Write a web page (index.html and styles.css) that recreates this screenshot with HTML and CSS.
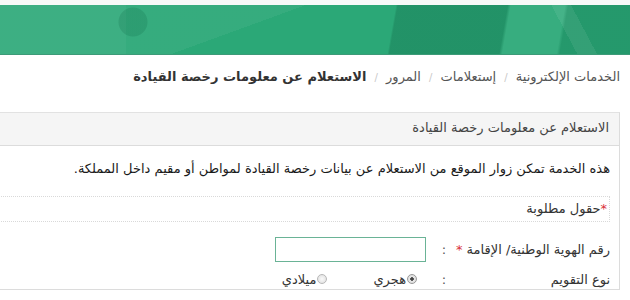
FILE: index.html
```html
<!DOCTYPE html>
<html lang="ar" dir="rtl">
<head>
<meta charset="utf-8">
<title>الاستعلام عن معلومات رخصة القيادة</title>
<link rel="stylesheet" href="styles.css">
</head>
<body>
<div class="top-strip"></div>
<header class="banner"></header>
<main class="page">
  <nav class="breadcrumb">
    <a href="#">الخدمات الإلكترونية</a>
    <span class="sep">/</span>
    <a href="#">إستعلامات</a>
    <span class="sep">/</span>
    <a href="#">المرور</a>
    <span class="sep">/</span>
    <strong>الاستعلام عن معلومات رخصة القيادة</strong>
  </nav>
  <section class="panel">
    <div class="panel-heading">الاستعلام عن معلومات رخصة القيادة</div>
    <div class="panel-body">
      <p class="desc">هذه الخدمة تمكن زوار الموقع من الاستعلام عن بيانات رخصة القيادة لمواطن أو مقيم داخل المملكة.</p>
      <div class="required-box"><span class="star">*</span>حقول مطلوبة</div>
      <div class="form-row">
        <label class="label" for="nid">رقم الهوية الوطنية/ الإقامة <span class="star">*</span></label>
        <span class="colon">:</span>
        <input class="text-input" id="nid" type="text">
      </div>
      <div class="form-row row-radio">
        <span class="label">نوع التقويم</span>
        <span class="colon">:</span>
        <div class="radios">
          <label class="opt"><input type="radio" name="cal" checked>هجري</label>
          <label class="opt"><input type="radio" name="cal">ميلادي</label>
        </div>
      </div>
    </div>
  </section>
</main>
</body>
</html>
```

FILE: styles.css
```css
html, body {
  margin: 0;
  padding: 0;
  background: #fff;
  overflow-x: hidden;
}
body {
  font-family: "DejaVu Sans", "Noto Sans", sans-serif;
  font-size: 13px;
  color: #333;
  direction: rtl;
}
.top-strip {
  height: 5px;
  background: #f7f9f8;
}
.banner {
  height: 49px;
  background-color: #2ba877;
  background-image:
    radial-gradient(circle at 133px 17px, rgba(0,80,50,0.16) 14px, transparent 15px),
    linear-gradient(62deg, transparent 88%, rgba(255,255,255,0.07) 88%, rgba(255,255,255,0.07) 91%, transparent 91%),
    linear-gradient(100deg, transparent 62%, rgba(0,60,40,0.2) 62.3%, rgba(0,60,40,0.2) 79.5%, rgba(255,255,255,0.06) 80%, rgba(255,255,255,0.06) 88.5%, rgba(0,60,40,0.14) 89%),
    linear-gradient(160deg, rgba(255,255,255,0.05) 0, rgba(255,255,255,0.05) 40%, transparent 40%),
    linear-gradient(90deg, rgba(255,255,255,0.04) 0, rgba(255,255,255,0.04) 20%, transparent 20%);
  border-bottom: 1px solid #3d9a78;
}
.page {
  padding: 0 10px 0 0;
}
.breadcrumb {
  margin-top: 12px;
  line-height: 20px;
  color: #555;
  white-space: nowrap;
}
.breadcrumb a {
  color: #555;
  text-decoration: none;
}
.breadcrumb .sep {
  color: #c8c8c8;
  font-size: 10px;
  padding: 0 4px;
}
.breadcrumb strong {
  color: #333;
  font-weight: bold;
}
.panel {
  margin-top: 24px;
  width: 900px;
  border: 1px solid #dcdcdc;
  border-top-color: #e2e2e2;
}
.panel-heading {
  background: #f5f5f5;
  border-bottom: 1px solid #dcdcdc;
  padding: 6px 10px 8px;
  line-height: 18px;
  color: #444;
}
.panel-body {
  padding: 13px 9px 0 0;
}
.desc {
  margin: 0 0 17px;
  line-height: 20px;
  color: #1a1a1a;
}
.required-box {
  border: 1px dotted #d9d9d9;
  padding: 3px 2px;
  line-height: 18px;
  color: #333;
}
.star {
  color: #d9303a;
}
.form-row {
  display: grid;
  grid-template-columns: 158px 16px 151px 1fr;
  align-items: center;
}
.required-box + .form-row {
  margin-top: 15px;
}
.row-radio {
  margin-top: 7px;
  height: 20px;
}
.label {
  color: #333;
  white-space: nowrap;
}
.colon {
  text-align: center;
  color: #555;
}
.text-input {
  grid-column: 3;
  margin-right: 10px;
  width: 151px;
  height: 25px;
  box-sizing: border-box;
  border: 1px solid #6ab396;
  padding: 0 5px;
  font: inherit;
}
.radios {
  grid-column: 3 / 5;
  display: flex;
  gap: 46px;
  margin-right: 19px;
}
.opt {
  display: flex;
  align-items: center;
  gap: 1px;
  color: #333;
}
.opt input {
  appearance: none;
  -webkit-appearance: none;
  margin: 0;
  width: 10px;
  height: 10px;
  border: 1px solid #b8b8b8;
  border-radius: 50%;
  background: radial-gradient(circle, #fafafa 0, #dcdcdc 100%);
  box-sizing: border-box;
}
.opt input:checked {
  background: radial-gradient(circle, #444 0, #444 1.5px, #e8e8e8 2px, #d8d8d8 100%);
  border-color: #999;
}
```
